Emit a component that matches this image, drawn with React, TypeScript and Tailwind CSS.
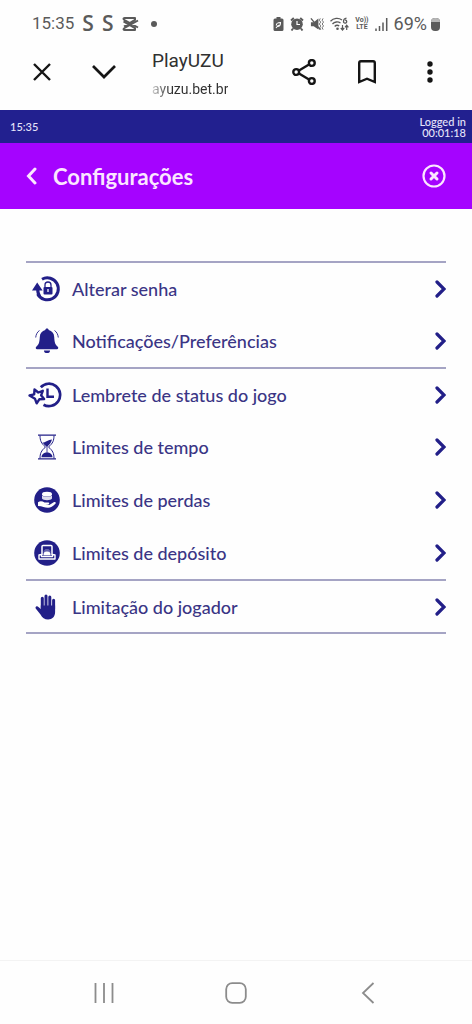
import type { ReactNode } from 'react';

const uiFont = "font-['Lato','Noto_Sans',sans-serif]";

function PasswordIcon() {
  return (
    <svg width="30" height="28" viewBox="0 0 30 28" fill="none" aria-hidden="true">
      <path d="M10 4.200A11 11 0 1 1 5.600 19" stroke="currentColor" strokeWidth="3" />
      <path d="M0 15.500 5.200 7.500l5.400 8H7.400c.2 2 .8 3.600 1.800 5l-2.600 1.400C5 20 4.300 18 4.200 15.500z" fill="currentColor" />
      <rect x="11.500" y="12" width="9" height="7.500" rx="1" fill="currentColor" />
      <path d="M13 12v-2a3 3 0 0 1 6 0v2" stroke="currentColor" strokeWidth="1.300" />
      <path d="M16 14v3" stroke="white" strokeWidth="1.300" />
    </svg>
  );
}

function BellIcon() {
  return (
    <svg width="24" height="26" viewBox="0 0 24 26" fill="none" aria-hidden="true">
      <path
        d="M12 .5c1 0 1.700.7 1.700 1.600 3.300.8 5.300 3.300 5.500 6.800.3 5.600 1 7.500 3.600 9.800.9.8.5 2.600-.9 2.600H2.100c-1.400 0-1.800-1.800-.9-2.600C3.800 16.400 4.500 14.500 4.800 8.900c.2-3.500 2.200-6 5.500-6.800C10.300 1.200 11 .5 12 .5z"
        fill="currentColor"
      />
      <path d="M9 22.500h6a3 2.600 0 0 1-6 0z" fill="currentColor" />
      <path d="M4.500 2.500C2.200 4 1 6.500.7 9.500M19.500 2.500c2.300 1.500 3.500 4 3.800 7" stroke="currentColor" strokeWidth="0.900" />
    </svg>
  );
}

function StatusReminderIcon() {
  return (
    <svg width="40" height="26" viewBox="0 0 40 26" fill="none" aria-hidden="true">
      <path d="M13.800 5.200A11.200 11.200 0 1 1 16.500 22.700" stroke="currentColor" strokeWidth="2.700" />
      <path d="M20.500 6.500v8.300H27" stroke="currentColor" strokeWidth="2.400" />
      <path
        d="m2.500 13.500 4.700-1.200.3-4.800 3.800 3 4.500-1.700-1.700 4.500 3 3.800-4.800.2-2.600 4-1.700-4.500z"
        fill="white"
        stroke="currentColor"
        strokeWidth="2.400"
        strokeLinejoin="round"
      />
    </svg>
  );
}

function HourglassIcon() {
  return (
    <svg width="20" height="26" viewBox="0 0 20 26" fill="none" aria-hidden="true">
      <path d="M1 1.200h18M1 24.800h18" stroke="currentColor" strokeWidth="1.300" />
      <path
        d="M3 1.500c0 5 1.200 7.800 5.500 11.500C4.200 16.700 3 19.500 3 24.500M17 1.500c0 5-1.200 7.800-5.500 11.500 4.300 3.700 5.500 6.500 5.500 11.500"
        stroke="currentColor"
        strokeWidth="1"
      />
      <path d="M5.500 8.500c3 .4 5.500-3 9.500-3-.8 3-2.200 5-5 7.200-2-1.400-3.500-2.700-4.500-4.200zM4.500 23.300c0-3 2.500-4.800 5.500-4.800s5.500 1.800 5.500 4.800z" fill="currentColor" />
      <path d="M10 12v7" stroke="currentColor" strokeWidth="0.800" />
    </svg>
  );
}

function LossIcon() {
  return (
    <svg width="26" height="26" viewBox="0 0 26 26" fill="none" aria-hidden="true">
      <circle cx="13" cy="13" r="12.800" fill="currentColor" />
      <ellipse cx="13" cy="7.200" rx="5" ry="2.400" fill="white" />
      <path d="M8 8.500c1.500 1.700 8.500 1.700 10 0v3c-1 2.200-9 2.200-10 0z" fill="white" opacity="0.850" />
      <path
        d="M4 15.200c2-1.500 4.500-1.200 6.500.3h3.800c1.300 0 1.300 1.800 0 1.900l-3 .2 4 .3 4.800-2.800c1.300-.7 2.300.6 1.300 1.600-2.600 2.600-4.600 4-7.400 4-3.500 0-5.500-1.500-10-1.700z"
        fill="white"
      />
    </svg>
  );
}

function DepositIcon() {
  return (
    <svg width="26" height="26" viewBox="0 0 26 26" fill="none" aria-hidden="true">
      <circle cx="13" cy="13" r="12.800" fill="currentColor" />
      <path d="M8 15V6.500c0-.6.400-1 1-1h8c.6 0 1 .4 1 1V15" stroke="white" strokeWidth="1.500" />
      <path d="M9.500 16V11l2-2h3l2 2v5z" fill="white" opacity="0.300" />
      <path d="M9.500 15c0-2.500 1-3.500 3.500-3.500s3.500 1 3.500 3.500z" fill="white" />
      <path d="M7.500 14.500 5 15v4h16v-4l-2.500-.5v2h-11z" stroke="white" strokeWidth="1.400" strokeLinejoin="round" />
    </svg>
  );
}

function HandIcon() {
  return (
    <svg width="24" height="26" viewBox="0 0 24 26" fill="none" aria-hidden="true">
      <path d="M7.300 14V4.200M11 13V2M14.800 13V3M18.600 15V6.200" stroke="currentColor" strokeWidth="3" strokeLinecap="round" />
      <path
        d="M5.800 11.500h14.300V18c0 4.600-2.800 7.500-7 7.500-3.600 0-5.800-1.700-7.600-5L.7 14.500c-.8-1.700 1.300-2.900 2.700-1.600L5.800 15z"
        fill="currentColor"
      />
    </svg>
  );
}

type Item = { label: string; icon: ReactNode };

const groups: Item[][] = [
  [
    { label: 'Alterar senha', icon: <PasswordIcon /> },
    { label: 'Notificações/Preferências', icon: <BellIcon /> },
  ],
  [
    { label: 'Lembrete de status do jogo', icon: <StatusReminderIcon /> },
    { label: 'Limites de tempo', icon: <HourglassIcon /> },
    { label: 'Limites de perdas', icon: <LossIcon /> },
    { label: 'Limites de depósito', icon: <DepositIcon /> },
  ],
  [{ label: 'Limitação do jogador', icon: <HandIcon /> }],
];

function StatusBar() {
  return (
    <div className="flex h-12 items-center justify-between px-8 text-[#5a5a5a]">
      <div className="flex items-center gap-2">
        <span className="text-[17px]">15:35</span>
        <span className="flex gap-2 font-['Open_Sans',sans-serif] text-[21px] font-semibold">
          <span>S</span>
          <span>S</span>
        </span>
        <svg width="18" height="14" viewBox="0 0 18 14" fill="none" stroke="currentColor" strokeWidth="2" strokeLinejoin="round" aria-hidden="true">
          <path d="M17 3.500 3.500 11c-1.300.8-1.300 2 0 2h10.500v-1.800L2.500 4.500M17 10.500 3.500 3C2.200 2.200 2.200 1 3.500 1H14v1.800L3 9.500" />
        </svg>
        <span className="ml-1 size-1.5 rounded-full bg-current" />
      </div>
      <div className="flex items-center gap-1.5">
        <svg width="11" height="14" viewBox="0 0 11 14" aria-hidden="true">
          <path d="M3.500 0h4v1.500H9a1.500 1.500 0 0 1 1.500 1.500v9.500A1.500 1.500 0 0 1 9 14H2A1.500 1.500 0 0 1 .5 12.500V3A1.500 1.500 0 0 1 2 1.500h1.500z" fill="currentColor" />
          <path d="M3.300 8.500c0-2.500 1-3 4.200-3 0 3-1 4-3 4M3 11l2.500-3" stroke="white" strokeWidth="1.100" fill="none" />
        </svg>
        <svg width="14" height="14" viewBox="0 0 14 14" fill="none" stroke="currentColor" aria-hidden="true">
          <circle cx="7" cy="7.200" r="5.800" fill="currentColor" stroke="none" />
          <path d="M1 3.500 3.800 1M13 3.500 10.200 1M3 11.500l-1.500 2M11 11.500l1.500 2" strokeWidth="1.900" />
          <path d="M7 4v3.500h3" stroke="white" strokeWidth="1.200" />
        </svg>
        <svg width="14" height="14" viewBox="0 0 15 14" fill="none" stroke="currentColor" aria-hidden="true">
          <path d="M1 5h3l5-4v12L4 9.500H1z" fill="currentColor" stroke="none" />
          <path d="m1 1 10 12" strokeWidth="1.500" />
          <path d="m11 1-1 2 1.500 2-1.500 2 1.500 2-1 2 1 2M14 1l-1 2 1.500 2L13 7l1.500 2-1.500 2 1 2" strokeWidth="0.900" />
        </svg>
        <svg width="19" height="14" viewBox="0 0 19 14" fill="none" stroke="currentColor" aria-hidden="true">
          <path d="M.5 4.200C3.500 1 8.500.5 12 3M2.500 7c2-2.300 5.500-2.700 8-1M4.700 9.500c1.200-1.300 3-1.500 4.500-.6" strokeWidth="1.300" />
          <circle cx="7.500" cy="11.800" r="1.300" fill="currentColor" stroke="none" />
          <path d="M16.500 1.200C14 1.500 13.500 3 13.500 4.500a1.600 1.600 0 1 0 1.600-1.500" strokeWidth="1.300" />
          <path d="M12.500 8v5m-1.700-2 1.700 2 1.700-2M16.700 13V8.500M15 10.300l1.700-2 1.700 2" strokeWidth="1.200" />
        </svg>
        <span className="text-center text-[7px] leading-[7px] font-bold">
          Vo))
          <br />
          LTE
        </span>
        <svg width="13" height="13" viewBox="0 0 13 13" stroke="currentColor" strokeWidth="1.500" aria-hidden="true">
          <path d="M1 10.500V13M4.500 8v5M8 4.500V13M11.700 0v13" />
        </svg>
        <span className="flex items-center gap-1">
          <span className="text-lg">69%</span>
          <span className="flex h-[13px] w-[9px] flex-col overflow-hidden rounded-sm bg-current">
            <span className="h-1 bg-[#b5b5b5]" />
          </span>
        </span>
      </div>
    </div>
  );
}

function BrowserBar() {
  return (
    <div className="flex h-[62px] items-center px-[30px] pb-3.5 text-[#151515]">
      <button type="button" aria-label="Fechar aba" className="flex w-6 justify-center">
        <svg width="18" height="18" viewBox="0 0 18 18" stroke="currentColor" strokeWidth="2.400">
          <path d="m1 1 16 16M17 1 1 17" />
        </svg>
      </button>
      <button type="button" aria-label="Expandir" className="ml-[38px] flex w-6 justify-center">
        <svg width="24" height="14" viewBox="0 0 24 14" fill="none" stroke="currentColor" strokeWidth="2.700">
          <path d="m1 1 11 11L23 1" />
        </svg>
      </button>
      <div className="ml-9 flex min-w-0 flex-1 flex-col pt-1.5">
        <span className="text-[19px] leading-7 text-[#303030]">PlayUZU</span>
        <span>
          <span className="bg-linear-to-r from-[#d0d0d0] to-[#303030] to-[18px] bg-clip-text text-sm leading-7 text-transparent">
            ayuzu.bet.br
          </span>
        </span>
      </div>
      <div className="flex items-center gap-[39px]">
        <button type="button" aria-label="Compartilhar" className="flex w-6 justify-center">
          <svg width="24" height="26" viewBox="0 0 24 26" fill="none" stroke="currentColor" strokeWidth="2.400">
            <circle cx="4.200" cy="13" r="2.900" />
            <circle cx="19.800" cy="4" r="2.900" />
            <circle cx="19.800" cy="22" r="2.900" />
            <path d="m7 11.500 10-6M7 14.500l10 6" />
          </svg>
        </button>
        <button type="button" aria-label="Favoritos" className="flex w-6 justify-center">
          <svg width="18" height="24" viewBox="0 0 18 24" fill="none" stroke="currentColor" strokeWidth="2.400">
            <path d="M1.200 22V3c0-1 .6-1.700 1.700-1.700h12.200c1.100 0 1.700.7 1.700 1.700v19L9 18.700z" />
          </svg>
        </button>
        <button type="button" aria-label="Mais opções" className="flex w-6 justify-center">
          <svg width="6" height="22" viewBox="0 0 6 22" fill="currentColor">
            <circle cx="3" cy="3" r="2.700" />
            <circle cx="3" cy="11" r="2.700" />
            <circle cx="3" cy="19" r="2.700" />
          </svg>
        </button>
      </div>
    </div>
  );
}

function SystemNav() {
  return (
    <nav aria-label="Sistema" className="flex h-16 items-center justify-between border-t border-[#f3f3f3] px-[92px] text-[#8c8c8c]">
      <button type="button" aria-label="Recentes" className="flex w-6 justify-center">
        <svg width="20" height="20" viewBox="0 0 20 20" stroke="currentColor" strokeWidth="1.800">
          <path d="M1.500 0v20M10 0v20M18.500 0v20" />
        </svg>
      </button>
      <button type="button" aria-label="Início" className="flex w-6 justify-center">
        <svg width="22" height="22" viewBox="0 0 22 22" fill="none" stroke="currentColor" strokeWidth="1.800">
          <rect x="1.200" y="1.200" width="19.600" height="19.600" rx="6" />
        </svg>
      </button>
      <button type="button" aria-label="Voltar" className="flex w-6 justify-center">
        <svg width="14" height="22" viewBox="0 0 14 22" fill="none" stroke="currentColor" strokeWidth="1.800">
          <path d="M12.500 1 2 11l10.500 10" />
        </svg>
      </button>
    </nav>
  );
}

export default function App() {
  return (
    <div className="flex min-h-screen flex-col bg-[#fefefe] font-['Roboto',sans-serif]">
      <StatusBar />
      <BrowserBar />
      <div className={`flex h-[33px] items-center justify-between bg-[#22208f] pr-1.5 pl-2.5 text-[11px] leading-[11px] font-medium text-[#e6e4fa] ${uiFont}`}>
        <span>15:35</span>
        <span className="text-right">
          Logged in
          <br />
          00:01:18
        </span>
      </div>
      <header className={`flex h-[66px] items-center bg-[#a503ff] px-[26px] text-[#fbe6ff] ${uiFont}`}>
        <button type="button" aria-label="Voltar" className="w-[27px]">
          <svg width="11" height="18" viewBox="0 0 11 18" fill="none" stroke="currentColor" strokeWidth="3" strokeLinecap="round">
            <path d="M9 2 2.500 9 9 16" />
          </svg>
        </button>
        <h1 className="flex-1 text-[22px] font-bold">Configurações</h1>
        <button type="button" aria-label="Fechar">
          <svg width="24" height="24" viewBox="0 0 24 24" fill="none" stroke="currentColor">
            <circle cx="12" cy="12" r="10.500" strokeWidth="2.200" />
            <path d="m9 9 6 6m0-6-6 6" strokeWidth="3" strokeLinecap="round" />
          </svg>
        </button>
      </header>
      <main className={`flex-1 px-[26px] pt-[52px] text-[#221f88] ${uiFont}`}>
        {groups.map((group) => (
          <ul key={group[0].label}>
            {group.map((item) => (
              <li key={item.label} className="h-[53px] first:border-t-2 first:border-[#a5a4c4]">
                <a href="#" className="flex h-full items-center">
                  <span className="flex w-[42px] justify-center">{item.icon}</span>
                  <span className="ml-1 flex-1 text-lg font-medium text-[#3a3585]">{item.label}</span>
                  <svg width="11" height="18" viewBox="0 0 11 18" fill="none" stroke="currentColor" strokeWidth="3.200" strokeLinecap="round" aria-hidden="true">
                    <path d="m2 2 7 7-7 7" />
                  </svg>
                </a>
              </li>
            ))}
          </ul>
        ))}
        <hr className="border-t-2 border-[#a5a4c4]" />
      </main>
      <SystemNav />
    </div>
  );
}
